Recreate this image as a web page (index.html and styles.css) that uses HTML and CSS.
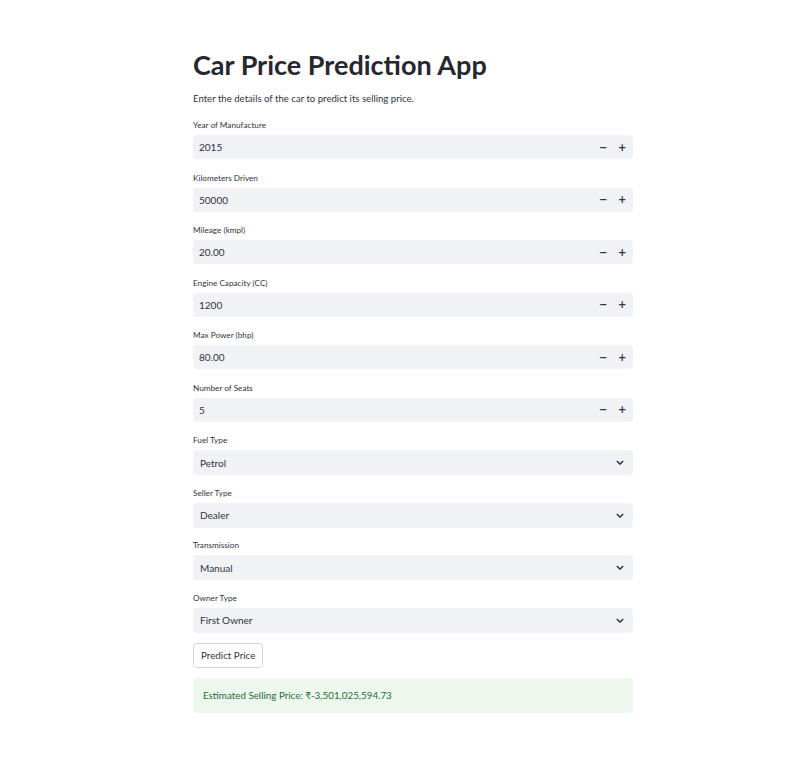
FILE: index.html
```html
<!DOCTYPE html>
<html lang="en">
<head>
<meta charset="utf-8">
<title>Car Price Prediction App</title>
<link rel="stylesheet" href="styles.css">
</head>
<body>
<main class="app">
  <h1 class="title">Car Price Prediction App</h1>
  <p class="intro">Enter the details of the car to predict its selling price.</p>

  <div class="field num">
    <label class="lbl">Year of Manufacture</label>
    <div class="box"><span class="val">2015</span><span class="steps"><span class="step">−</span><span class="step">+</span></span></div>
  </div>
  <div class="field num">
    <label class="lbl">Kilometers Driven</label>
    <div class="box"><span class="val">50000</span><span class="steps"><span class="step">−</span><span class="step">+</span></span></div>
  </div>
  <div class="field num">
    <label class="lbl">Mileage (kmpl)</label>
    <div class="box"><span class="val">20.00</span><span class="steps"><span class="step">−</span><span class="step">+</span></span></div>
  </div>
  <div class="field num">
    <label class="lbl">Engine Capacity (CC)</label>
    <div class="box"><span class="val">1200</span><span class="steps"><span class="step">−</span><span class="step">+</span></span></div>
  </div>
  <div class="field num">
    <label class="lbl">Max Power (bhp)</label>
    <div class="box"><span class="val">80.00</span><span class="steps"><span class="step">−</span><span class="step">+</span></span></div>
  </div>
  <div class="field num">
    <label class="lbl">Number of Seats</label>
    <div class="box"><span class="val">5</span><span class="steps"><span class="step">−</span><span class="step">+</span></span></div>
  </div>

  <div class="field sel">
    <label class="lbl">Fuel Type</label>
    <div class="box"><span class="val">Petrol</span><svg class="chev" viewBox="0 0 10 6" width="8" height="5"><path d="M1 1l4 4 4-4" fill="none" stroke="#31333f" stroke-width="1.8"/></svg></div>
  </div>
  <div class="field sel">
    <label class="lbl">Seller Type</label>
    <div class="box"><span class="val">Dealer</span><svg class="chev" viewBox="0 0 10 6" width="8" height="5"><path d="M1 1l4 4 4-4" fill="none" stroke="#31333f" stroke-width="1.8"/></svg></div>
  </div>
  <div class="field sel">
    <label class="lbl">Transmission</label>
    <div class="box"><span class="val">Manual</span><svg class="chev" viewBox="0 0 10 6" width="8" height="5"><path d="M1 1l4 4 4-4" fill="none" stroke="#31333f" stroke-width="1.8"/></svg></div>
  </div>
  <div class="field sel">
    <label class="lbl">Owner Type</label>
    <div class="box"><span class="val">First Owner</span><svg class="chev" viewBox="0 0 10 6" width="8" height="5"><path d="M1 1l4 4 4-4" fill="none" stroke="#31333f" stroke-width="1.8"/></svg></div>
  </div>

  <button class="btn" type="button">Predict Price</button>

  <div class="success">Estimated Selling Price: ₹-3,501,025,594.73</div>
</main>
</body>
</html>
```

FILE: styles.css
```css
html, body {
  margin: 0;
  padding: 0;
  background: #ffffff;
}

body {
  font-family: Lato, "Noto Sans", sans-serif;
  color: #31333f;
}

.app {
  width: 440px;
  margin: 0 0 0 193px;
  padding-top: 46px;
  display: flex;
  flex-direction: column;
}

.title {
  margin: 0;
  font-size: 27px;
  line-height: 38px;
  font-weight: 700;
  color: #262730;
}

.intro {
  margin: 8px 0 12px;
  font-size: 9.6px;
  line-height: 14px;
}

.field {
  display: flex;
  flex-direction: column;
}

.field.num {
  margin-bottom: 11.5px;
}

.field.sel {
  margin-bottom: 10.5px;
}

.lbl {
  font-size: 8.2px;
  line-height: 14px;
  margin-bottom: 3px;
}

.box {
  background: #f0f2f6;
  border-radius: 4px;
  display: flex;
  align-items: center;
  justify-content: space-between;
  padding: 0 7px 0 6px;
  font-size: 10px;
}

.num .box {
  height: 24px;
}

.sel .box {
  height: 25px;
  padding-left: 7px;
  padding-right: 9px;
}

.steps {
  display: flex;
  gap: 11px;
}

.step {
  font-family: "DejaVu Sans", sans-serif;
  font-weight: 700;
  font-size: 10px;
  width: 8px;
  text-align: center;
  color: #31333f;
}

.chev {
  display: block;
}

.btn {
  align-self: flex-start;
  margin-top: -0.5px;
  height: 25px;
  padding: 0 7px;
  font-family: Lato, "Noto Sans", sans-serif;
  font-size: 9.8px;
  color: #31333f;
  background: #ffffff;
  border: 1px solid #d5d6d9;
  border-radius: 4px;
}

.success {
  margin-top: 10px;
  height: 35px;
  display: flex;
  align-items: center;
  padding: 0 10px;
  background: #ecf8ee;
  color: #2a6b3a;
  border-radius: 4px;
  font-size: 9.8px;
}
```
